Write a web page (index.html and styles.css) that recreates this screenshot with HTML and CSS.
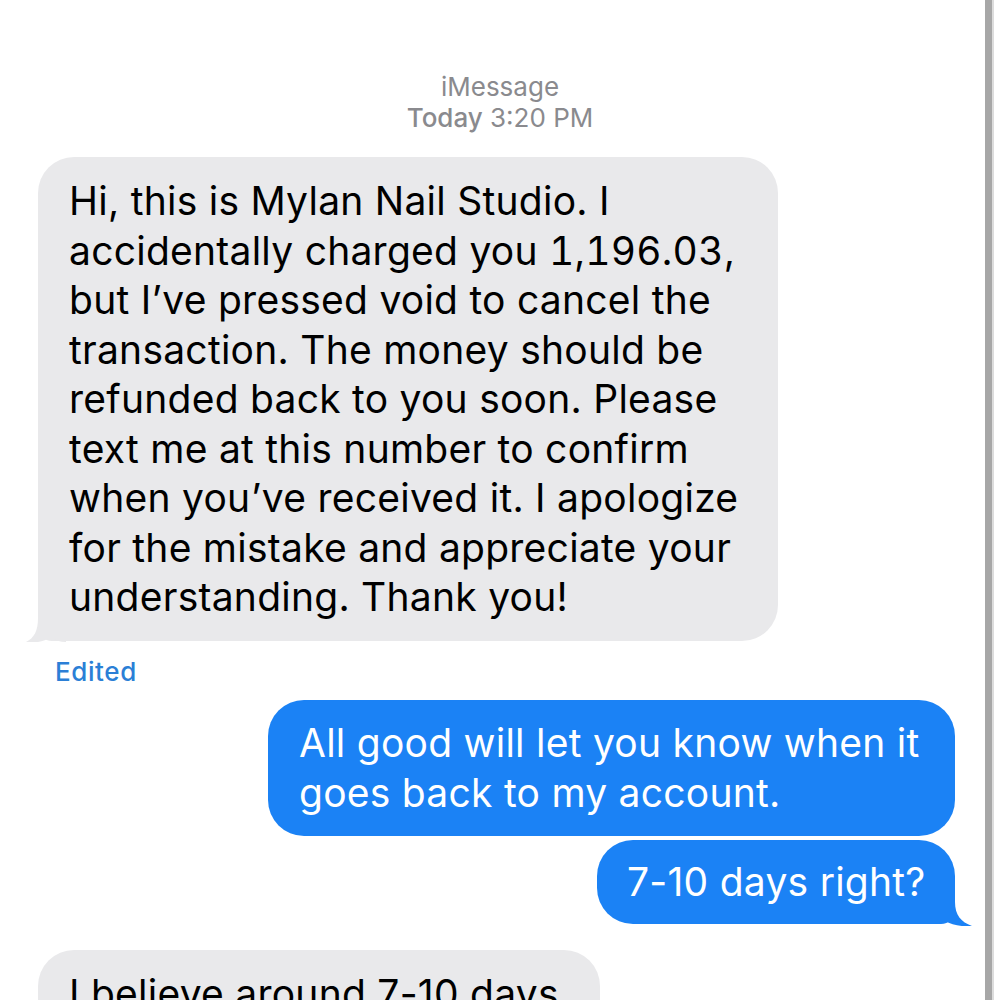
FILE: index.html
```html
<!DOCTYPE html>
<html lang="en">
<head>
<meta charset="utf-8">
<title>iMessage</title>
<link rel="stylesheet" href="styles.css">
</head>
<body>
<div class="screen">
  <main class="thread">
    <header class="meta">
      <div class="service">iMessage</div>
      <div class="stamp"><span class="day">Today</span> 3:20 PM</div>
    </header>

    <div class="row in">
      <div class="bubble gray b-long">
        Hi, this is Mylan Nail Studio. I<br>
        accidentally charged you <span class="amount">1,196.03</span>,<br>
        but I’ve pressed void to cancel the<br>
        transaction. The money should be<br>
        refunded back to you soon. Please<br>
        text me at this number to confirm<br>
        when you’ve received it. I apologize<br>
        for the mistake and appreciate your<br>
        understanding. Thank you!
        <svg class="tail tail-left" width="40" height="40" viewBox="0 0 40 40"><path d="M12 0 L12 16 C12 29 8 36 0 40 C9 41.5 18 39.5 25 35 C29 38.5 34 40 40 40 L40 0 Z"/></svg>
      </div>
    </div>
    <div class="edited">Edited</div>

    <div class="row out">
      <div class="bubble blue b-good">
        All good will let you know when it<br>
        goes back to my account.
      </div>
    </div>
    <div class="row out tight">
      <div class="bubble blue b-days">
        7-10 days right?
        <svg class="tail tail-right" width="46" height="42" viewBox="0 0 46 42"><path d="M28 0 L28 18 C28 31 34 38 45 42 C35 43 25 41 18 37 C13 39 7 40 0 40 L0 0 Z"/></svg>
      </div>
    </div>

    <div class="row in spaced">
      <div class="bubble gray b-believe">
        I believe around 7-10 days
      </div>
    </div>
  </main>
  <div class="rail"></div>
  <div class="edge"></div>
</div>
</body>
</html>
```

FILE: styles.css
```css
* { box-sizing: border-box; }

html, body {
  margin: 0;
  padding: 0;
  background: #ffffff;
}

body {
  font-family: Inter, "Liberation Sans", Arial, sans-serif;
  color: #000000;
}

.screen {
  display: flex;
  height: 1000px;
  overflow: hidden;
}

.thread {
  width: 985px;
  flex: none;
  padding-top: 71px;
}

.rail {
  width: 7px;
  flex: none;
  background: #a7a7a7;
}

.edge {
  flex: 1;
  background: #ffffff;
  border-left: 2px solid #dcdcdc;
}

.meta {
  text-align: center;
  color: #8a8a8e;
  font-size: 26px;
  line-height: 31px;
  padding-left: 15px;
}

.day {
  font-weight: 500;
}

.row {
  display: flex;
}

.row.in {
  justify-content: flex-start;
  padding-left: 38px;
}

.row.out {
  justify-content: flex-end;
  padding-right: 30px;
}

.row.tight {
  margin-top: 4px;
}

.row.spaced {
  margin-top: 26px;
}

.bubble {
  position: relative;
  font-size: 39px;
  line-height: 49.5px;
  letter-spacing: 0.25px;
  white-space: nowrap;
  border-radius: 36px;
  padding-left: 31px;
}

.amount {
  font-variant-numeric: tabular-nums;
}

.gray {
  background: #e9e9eb;
  color: #000000;
}

.blue {
  background: #1b82f5;
  color: #ffffff;
}

.b-long {
  width: 740px;
  margin-top: 24px;
  padding-top: 19px;
  padding-bottom: 19.5px;
  border-bottom-left-radius: 14px;
}

.b-good {
  width: 687px;
  margin-top: 13px;
  padding-top: 18px;
  padding-bottom: 18.5px;
}

.b-days {
  width: 358px;
  padding-left: 30px;
  padding-top: 17px;
  padding-bottom: 17.5px;
  border-bottom-right-radius: 14px;
}

.b-believe {
  width: 562px;
  padding-top: 19px;
  padding-bottom: 19px;
}

.tail {
  position: absolute;
  bottom: 0;
  display: block;
}

.tail-left {
  left: -12px;
  bottom: -1px;
  fill: #e9e9eb;
}

.tail-right {
  right: -18px;
  bottom: -2px;
  fill: #1b82f5;
}

.edited {
  margin-top: 16px;
  padding-left: 55px;
  color: #2b7fd6;
  font-size: 26px;
  line-height: 30px;
  letter-spacing: 0.6px;
  font-weight: 500;
}
```
